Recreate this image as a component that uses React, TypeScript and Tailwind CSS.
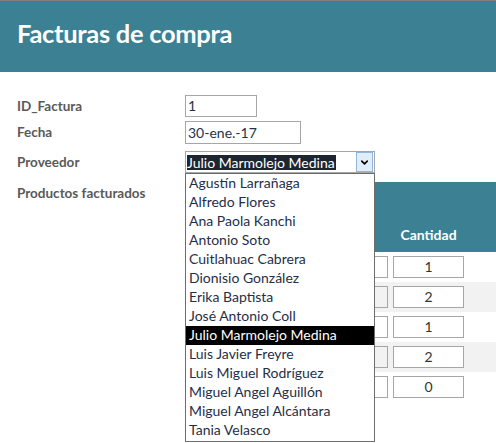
import { ChevronDown } from 'lucide-react';

const PROVEEDORES = [
  'Agustín Larrañaga',
  'Alfredo Flores',
  'Ana Paola Kanchi',
  'Antonio Soto',
  'Cuitlahuac Cabrera',
  'Dionisio González',
  'Erika Baptista',
  'José Antonio Coll',
  'Julio Marmolejo Medina',
  'Luis Javier Freyre',
  'Luis Miguel Rodríguez',
  'Miguel Angel Aguillón',
  'Miguel Angel Alcántara',
  'Tania Velasco',
];

const CANTIDADES = [1, 2, 1, 2, 0];

const font = { fontFamily: 'Lato, "Open Sans", sans-serif' };

export default function App() {
  const seleccionado = 'Julio Marmolejo Medina';

  return (
    <div className="w-[496px] h-[443px] overflow-hidden bg-white border-t border-[#808080]" style={font}>
      {/* Encabezado */}
      <div className="h-[71px] bg-[#3b8193] flex items-center pl-[17px]">
        <h1 className="text-white font-bold text-[25.5px] leading-none tracking-[-0.3px] pb-[5px]">Facturas de compra</h1>
      </div>

      {/* Formulario */}
      <div className="relative pt-[23px]">
        <div className="flex h-[22px] items-center">
          <div className="w-[185px] pl-[17px] text-[13.5px] font-bold text-[#595959]">ID_Factura</div>
          <div className="w-[72px] h-[22px] border border-[#a6a6a6] px-[2px] text-[14px] leading-[20px] text-[#243447]">1</div>
        </div>
        <div className="flex h-[23px] items-center mt-[4px]">
          <div className="w-[185px] pl-[17px] text-[13.5px] font-bold text-[#595959]">Fecha</div>
          <div className="w-[116px] h-[23px] border border-[#a6a6a6] px-[2px] text-[14px] leading-[21px] text-[#243447]">30-ene.-17</div>
        </div>
        <div className="flex h-[22px] items-center mt-[7px]">
          <div className="w-[185px] pl-[17px] text-[13.5px] font-bold text-[#595959]">Proveedor</div>
          <div className="w-[190px] h-[22px] border border-[#a6a6a6] flex items-center pl-px">
            <span className="bg-[#1c2530] text-white text-[14px] leading-[15px] h-[15px] pr-px">{seleccionado}</span>
            <div className="ml-auto mr-px w-[17px] h-[20px] bg-[#e0eefb] border border-[#8fb7e0] flex items-center justify-center">
              <ChevronDown className="w-[11px] h-[11px] text-black" strokeWidth={3.5} />
            </div>
          </div>
        </div>

        {/* Subformulario de productos */}
        <div className="flex mt-[9px]">
          <div className="w-[185px] pl-[17px] pt-[1px] text-[13.5px] font-bold text-[#595959]">Productos facturados</div>
          <div className="flex-1">
            <div className="h-[70px] bg-[#3b8193] flex items-end">
              <div className="w-[208px]" />
              <div className="w-[71px] text-center text-white font-bold text-[14px] pb-[7px]">Cantidad</div>
            </div>
            {CANTIDADES.map((c, i) => (
              <div key={i} className={`h-[30px] flex items-center ${i % 2 === 1 ? 'bg-[#f2f2f2]' : 'bg-white'}`}>
                <div className="w-[115px]" />
                <div className="w-[88px] h-[22px] border border-[#a6a6a6]" />
                <div className="w-[5px]" />
                <div className="w-[71px] h-[22px] border border-[#a6a6a6] bg-white text-center text-[14px] leading-[20px] text-[#333]">{c}</div>
              </div>
            ))}
          </div>
        </div>

        {/* Lista desplegable del combo */}
        <div className="absolute left-[185px] top-[101px] w-[190px] h-[269px] bg-white border border-[#6d6d6d]">
          {PROVEEDORES.map((p) => (
            <div
              key={p}
              className={`h-[19px] pl-[3px] text-[14px] leading-[18px] whitespace-nowrap ${p === seleccionado ? 'bg-black text-white' : 'text-[#1f2f48]'}`}
            >
              {p}
            </div>
          ))}
        </div>
      </div>
    </div>
  );
}
